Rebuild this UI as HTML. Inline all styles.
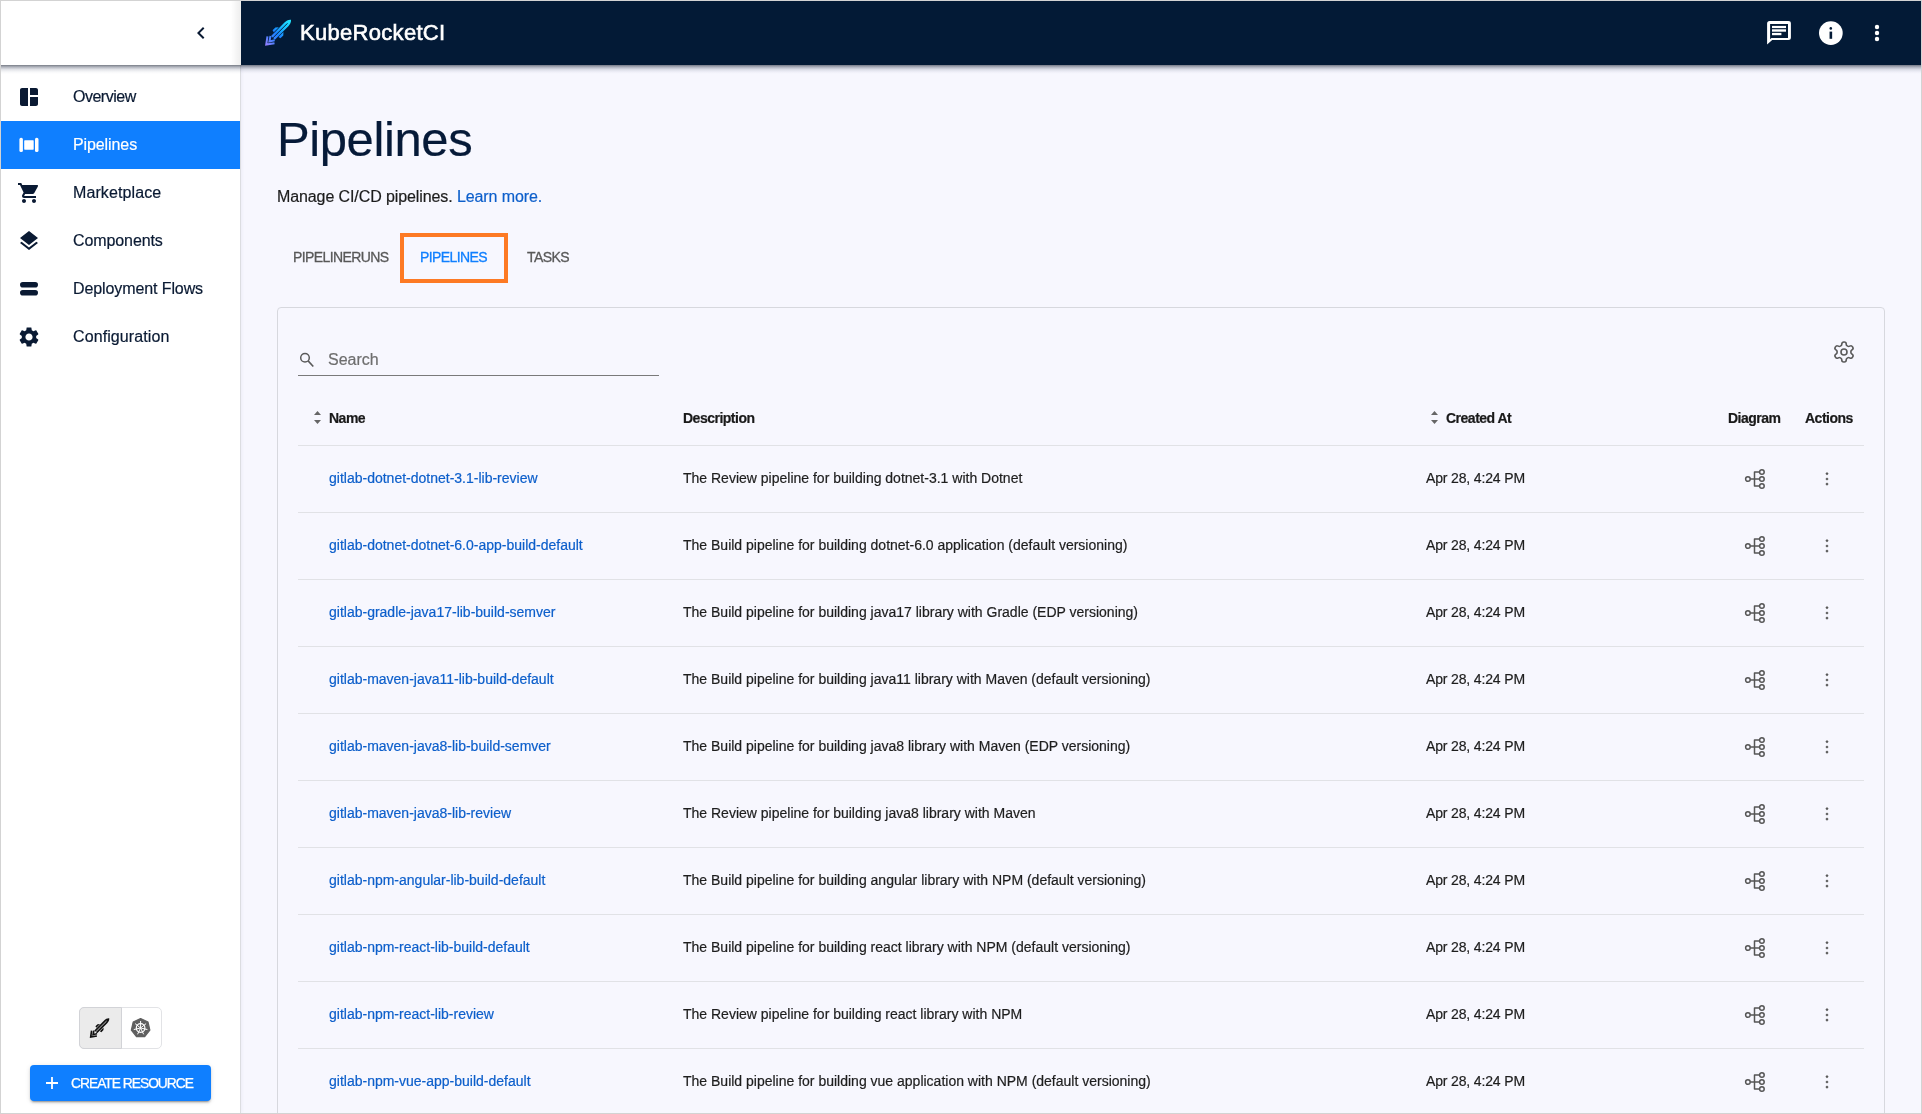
<!DOCTYPE html>
<html><head><meta charset="utf-8">
<style>
*{box-sizing:border-box;margin:0;padding:0}
html,body{width:1922px;height:1114px;overflow:hidden}
body{position:relative;will-change:transform;background:#f7f7fe;font-family:"Liberation Sans",sans-serif;color:#212121;-webkit-text-stroke:0.2px currentColor}
.abs{position:absolute}
.frame{position:absolute;left:0;top:0;width:1922px;height:1114px;border:1px solid #d3d3d3;z-index:50;pointer-events:none}
/* top bars */
.sbtop{left:1px;top:1px;width:240px;height:64px;background:#fff;z-index:5}
.hdr{left:241px;top:1px;width:1680px;height:64px;background:#031a36;z-index:5}
.shadow{left:1px;top:65px;width:1920px;height:9px;z-index:6;background:linear-gradient(to bottom,rgba(20,28,45,.58) 0px,rgba(40,50,75,.36) 2px,rgba(70,80,110,.16) 4.5px,rgba(110,120,150,.05) 7px,rgba(120,130,150,0) 9px)}
.lshadow{left:231px;top:1px;width:10px;height:64px;z-index:6;background:linear-gradient(to right,rgba(0,0,0,0),rgba(0,0,0,.07))}
/* sidebar */
.side{left:1px;top:65px;width:240px;height:1048px;background:#fff;border-right:1px solid #dcdde1;z-index:2;box-shadow:1px 0 3px rgba(60,60,120,.06)}
.nav{position:absolute;left:0;width:239px;height:48px;display:flex;align-items:center;font-size:16px;color:#0a1a33}
.nav svg{position:absolute;left:16px;top:12px;width:24px;height:24px}
.nav span{position:absolute;left:72px;top:0;line-height:48px;white-space:nowrap;letter-spacing:-0.1px}
.nav.sel{background:#0f7fff;color:#fff}
/* main */
.title{left:277px;top:109px;font-size:49px;line-height:60px;color:#061a38;letter-spacing:-0.4px}
.sub{left:277px;top:187px;font-size:16px;line-height:20px;color:#1c1c1c;letter-spacing:-0.1px}
.sub a{color:#0d5fcb;text-decoration:none}
.tab{top:247px;font-size:14px;line-height:20px;color:#585858;white-space:nowrap;letter-spacing:-0.6px;-webkit-text-stroke:0.3px currentColor}
.card{left:277px;top:307px;width:1608px;height:820px;border:1px solid #d7d8de;border-radius:4px;background:#f7f7fe}
.row{position:absolute;left:298px;width:1566px;height:67px;border-bottom:1px solid #e1e2e6}
.cell{position:absolute;top:0;height:66px;line-height:64px;font-size:14px;white-space:nowrap}
.lnk{left:31px;color:#0d5fcb}
.desc{left:385px;color:#1e1e1e}
.date{left:1128px;color:#1e1e1e;letter-spacing:-0.15px}
.hcell{position:absolute;top:0;height:54px;line-height:54px;font-size:14px;font-weight:700;color:#1a1a1a;white-space:nowrap;letter-spacing:-0.5px}
</style></head><body>
<div class="frame"></div>

<!-- sidebar top -->
<div class="abs sbtop">
  <svg class="abs" style="left:188px;top:20px" width="24" height="24" viewBox="0 0 24 24"><path fill="#0a1a33" d="M15.41 7.41 14 6l-6 6 6 6 1.41-1.41L10.83 12z"/></svg>
</div>
<!-- header -->
<div class="abs hdr">
  <svg class="abs" style="left:19px;top:13px" width="36" height="36" viewBox="0 0 36 36">
    <defs><linearGradient id="rg" gradientUnits="userSpaceOnUse" x1="0" y1="0" x2="0" y2="36"><stop offset="0" stop-color="#22eaff"/><stop offset=".3" stop-color="#18bfff"/><stop offset=".55" stop-color="#1a82ff"/><stop offset=".72" stop-color="#3a82ff"/><stop offset="1" stop-color="#9a80ff"/></linearGradient></defs>
    <g transform="translate(31,5.8) rotate(45)">
      <path fill="url(#rg)" d="M0 0C2 1.6 2.7 4 2.7 6.5V25.5H-2.7V6.5C-2.7 4-2 1.6 0 0Z"/>
      <path fill="url(#rg)" d="M3.3 14L5.6 16.5V20.5L3.3 21ZM-3.3 14L-5.6 16.5V20.5L-3.3 21Z"/>
      <path stroke="#031a36" stroke-width="0.9" d="M0 5V27"/>
      <path fill="none" stroke="url(#rg)" stroke-width="2" stroke-linejoin="miter" d="M-5 28.3L0 35L5 28.3M-3 26L0 30.5L3 26"/>
    </g>
  </svg>
  <div class="abs" style="left:59px;top:17px;font-size:22px;line-height:30px;color:#fff;letter-spacing:0.3px;-webkit-text-stroke:0.6px #fff">KubeRocketCI</div>
  <svg class="abs" style="left:1521px;top:17px" width="34" height="30" viewBox="0 0 34 30"><path fill="#fff" fill-rule="evenodd" d="M7.6 3H26.4A2.5 2.5 0 0 1 28.9 5.5V19.6A2.5 2.5 0 0 1 26.4 22.1H10.2L5.1 26.6V5.5A2.5 2.5 0 0 1 7.6 3ZM8.1 6.1V21.2L9.4 19.9H26V6.1Z"/><rect x="10" y="7.9" width="14" height="2.2" fill="#fff"/><rect x="10" y="11.3" width="14" height="2.4" fill="#fff"/><rect x="10" y="14.9" width="9.4" height="2.3" fill="#fff"/></svg>
  <svg class="abs" style="left:1578px;top:20px" width="24" height="24" viewBox="0 0 24 24"><circle cx="11.85" cy="12.05" r="11.85" fill="#fff"/><circle cx="11.8" cy="7.4" r="1.3" fill="#031a36"/><rect x="10.55" y="10.6" width="2.6" height="7.2" fill="#031a36"/></svg>
  <svg class="abs" style="left:1624px;top:20px" width="24" height="24" viewBox="0 0 24 24"><circle cx="12" cy="6" r="2.2" fill="#fff"/><circle cx="12" cy="12" r="2.2" fill="#fff"/><circle cx="12" cy="18" r="2.2" fill="#fff"/></svg>
</div>
<div class="abs shadow"></div><div class="abs lshadow"></div>

<!-- sidebar -->
<div class="abs side">
  <div class="nav" style="top:8px"><svg viewBox="0 0 24 24"><path fill="#0a1a33" d="M11 21H5c-1.1 0-2-.9-2-2V5c0-1.1.9-2 2-2h6v18zm2 0h6c1.1 0 2-.9 2-2v-7h-8v9zm8-11V5c0-1.1-.9-2-2-2h-6v7h8z"/></svg><span style="letter-spacing:-0.5px">Overview</span></div>
  <div class="nav sel" style="top:56px"><svg viewBox="0 0 24 24"><rect x="2.4" y="4.8" width="3.5" height="14.3" rx="1.6" fill="#fff"/><rect x="7.2" y="7.3" width="9.5" height="9.4" rx="0.6" fill="#fff"/><rect x="18" y="4.8" width="3.5" height="14.3" rx="1.6" fill="#fff"/></svg><span>Pipelines</span></div>
  <div class="nav" style="top:104px"><svg viewBox="0 0 24 24"><path fill="#0a1a33" d="M7 18c-1.1 0-1.99.9-1.99 2S5.9 22 7 22s2-.9 2-2-.9-2-2-2zM1 2v2h2l3.6 7.59-1.35 2.45c-.16.28-.25.61-.25.96 0 1.1.9 2 2 2h12v-2H7.42c-.14 0-.25-.11-.25-.25l.03-.12.9-1.63h7.45c.75 0 1.41-.41 1.75-1.03l3.58-6.49A1.003 1.003 0 0 0 20 4H5.21l-.94-2H1zm16 16c-1.1 0-1.99.9-1.99 2s.89 2 1.99 2 2-.9 2-2-.9-2-2-2z"/></svg><span style="letter-spacing:0.1px">Marketplace</span></div>
  <div class="nav" style="top:152px"><svg viewBox="0 0 24 24"><path fill="#0a1a33" d="m11.99 18.54-7.37-5.73L3 14.07l9 7 9-7-1.63-1.27-7.38 5.74zM12 16l7.36-5.73L21 9l-9-7-9 7 1.63 1.27L12 16z"/></svg><span>Components</span></div>
  <div class="nav" style="top:200px"><svg viewBox="0 0 24 24"><rect x="3" y="5" width="18" height="5.6" rx="2.8" fill="#0a1a33"/><rect x="3" y="13" width="18" height="5.6" rx="2.8" fill="#0a1a33"/></svg><span>Deployment Flows</span></div>
  <div class="nav" style="top:248px"><svg viewBox="0 0 24 24"><path fill="#0a1a33" d="M19.14 12.94c.04-.3.06-.61.06-.94 0-.32-.02-.64-.07-.94l2.03-1.58c.18-.14.23-.41.12-.61l-1.92-3.32c-.12-.22-.37-.29-.59-.22l-2.39.96c-.5-.38-1.03-.7-1.62-.94l-.36-2.54c-.04-.24-.24-.41-.48-.41h-3.84c-.24 0-.43.17-.47.41l-.36 2.54c-.59.24-1.13.57-1.62.94l-2.39-.96c-.22-.08-.47 0-.59.22L2.74 8.87c-.12.21-.08.47.12.61l2.03 1.58c-.05.3-.09.63-.09.94s.02.64.07.94l-2.03 1.58c-.18.14-.23.41-.12.61l1.92 3.32c.12.22.37.29.59.22l2.39-.96c.5.38 1.03.7 1.62.94l.36 2.54c.05.24.24.41.48.41h3.84c.24 0 .44-.17.47-.41l.36-2.54c.59-.24 1.13-.56 1.62-.94l2.39.96c.22.08.47 0 .59-.22l1.92-3.32c.12-.22.07-.47-.12-.61l-2.01-1.58zM12 15.6c-1.98 0-3.6-1.62-3.6-3.6s1.62-3.6 3.6-3.6 3.6 1.62 3.6 3.6-1.62 3.6-3.6 3.6z"/></svg><span style="letter-spacing:0.1px">Configuration</span></div>

  <!-- toggle -->
  <div class="abs" style="left:78px;top:942px;width:83px;height:42px;border:1px solid #e2e3e6;border-radius:5px;background:#fff;overflow:visible">
    <div class="abs" style="left:-1px;top:-1px;width:43px;height:42px;background:#ebebeb;border:1px solid #d2d3d7;border-radius:5px 0 0 5px"></div>
    <svg class="abs" style="left:6px;top:6px" width="27" height="27" viewBox="0 0 36 36">
      <g transform="translate(31,5.8) rotate(45)">
      <path fill="#111" d="M0 0C2 1.6 2.7 4 2.7 6.5V25.5H-2.7V6.5C-2.7 4-2 1.6 0 0Z"/>
      <path fill="#111" d="M3.3 14L5.6 16.5V20.5L3.3 21ZM-3.3 14L-5.6 16.5V20.5L-3.3 21Z"/>
      <path stroke="#ebebeb" stroke-width="1" d="M0 5V27"/>
      <path fill="none" stroke="#111" stroke-width="2.2" d="M-5 28.3L0 35L5 28.3M-3 26L0 30.5L3 26"/>
      </g></svg>
    <svg class="abs" style="left:50px;top:9px" width="22" height="22" viewBox="0 0 22 22">
      <path fill="#5f5f5f" stroke="#5f5f5f" stroke-width="1.2" stroke-linejoin="round" d="M10.60 1.50L18.03 5.08L19.86 13.11L14.72 19.56L6.48 19.56L1.34 13.11L3.17 5.08Z"/>
      <circle cx="10.6" cy="11" r="4.3" fill="none" stroke="#fff" stroke-width="1.2"/>
      <path stroke="#fff" stroke-width="1" stroke-linecap="round" d="M10.60 9.80L10.60 4.40M11.54 10.25L15.76 6.88M11.77 11.27L17.03 12.47M11.12 12.08L13.46 16.95M10.08 12.08L7.74 16.95M9.43 11.27L4.17 12.47M9.66 10.25L5.44 6.88"/>
      <circle cx="10.6" cy="11" r="1.1" fill="#fff"/>
    </svg>
  </div>
  <!-- create resource -->
  <div class="abs" style="left:29px;top:1000px;width:181px;height:36px;background:#0f7fff;border-radius:4px;box-shadow:0 3px 1px -2px rgba(0,0,0,.2),0 2px 2px 0 rgba(0,0,0,.14),0 1px 5px 0 rgba(0,0,0,.12)">
    <svg class="abs" style="left:15px;top:11px" width="14" height="14" viewBox="0 0 14 14"><path d="M7 1v12M1 7h12" stroke="#fff" stroke-width="1.8"/></svg>
    <div class="abs" style="left:41px;top:1px;line-height:36px;font-size:13.8px;color:#fff;white-space:nowrap;letter-spacing:-1px;-webkit-text-stroke:0.25px #fff">CREATE RESOURCE</div>
  </div>
</div>

<!-- main -->
<div class="abs title">Pipelines</div>
<div class="abs sub">Manage CI/CD pipelines. <a>Learn more.</a></div>
<div class="abs tab" style="left:293px">PIPELINERUNS</div>
<div class="abs tab" style="left:420px;color:#0f7fff">PIPELINES</div>
<div class="abs tab" style="left:527px">TASKS</div>
<div class="abs" style="left:400px;top:233px;width:108px;height:50px;border:4px solid #fd7a24"></div>

<div class="abs card"></div>
<!-- search -->
<svg class="abs" style="left:298px;top:351px" width="18" height="18" viewBox="0 0 18 18"><circle cx="7" cy="6.8" r="4.3" stroke="#5a5a5a" stroke-width="1.5" fill="none"/><path d="M10.1 9.9l5.2 5.6" stroke="#5a5a5a" stroke-width="1.6"/></svg>
<div class="abs" style="left:328px;top:350px;font-size:16px;line-height:20px;color:#6e6e6e">Search</div>
<div class="abs" style="left:298px;top:375px;width:361px;height:1px;background:#7a7a7a"></div>
<!-- settings gear -->
<svg class="abs" style="left:1832px;top:340px" width="24" height="24" viewBox="0 0 24 24" fill="none" stroke="#5a5a5a" stroke-width="1.6" stroke-linecap="round" stroke-linejoin="round"><path d="M12.22 2h-.44a2 2 0 0 0-2 2v.18a2 2 0 0 1-1 1.73l-.43.25a2 2 0 0 1-2 0l-.15-.08a2 2 0 0 0-2.73.73l-.22.38a2 2 0 0 0 .73 2.730l.15.1a2 2 0 0 1 1 1.72v.51a2 2 0 0 1-1 1.74l-.15.09a2 2 0 0 0-.73 2.73l.22.38a2 2 0 0 0 2.73.73l.15-.08a2 2 0 0 1 2 0l.43.25a2 2 0 0 1 1 1.73V20a2 2 0 0 0 2 2h.44a2 2 0 0 0 2-2v-.18a2 2 0 0 1 1-1.73l.43-.25a2 2 0 0 1 2 0l.15.08a2 2 0 0 0 2.73-.73l.22-.39a2 2 0 0 0-.73-2.73l-.15-.08a2 2 0 0 1-1-1.74v-.5a2 2 0 0 1 1-1.74l.15-.09a2 2 0 0 0 .73-2.73l-.22-.38a2 2 0 0 0-2.73-.73l-.15.08a2 2 0 0 1-2 0l-.43-.25a2 2 0 0 1-1-1.73V4a2 2 0 0 0-2-2z"/><circle cx="12" cy="12" r="3"/></svg>

<!-- table header -->
<div class="row" style="top:391px;height:55px">
  <svg class="abs" style="left:15px;top:19px" width="9" height="16" viewBox="0 0 9 16"><path d="M1 5l3.5-4L8 5z M1 10l3.5 4L8 10z" fill="#666"/></svg>
  <div class="hcell" style="left:31px">Name</div>
  <div class="hcell" style="left:385px">Description</div>
  <svg class="abs" style="left:1132px;top:19px" width="9" height="16" viewBox="0 0 9 16"><path d="M1 5l3.5-4L8 5z M1 10l3.5 4L8 10z" fill="#666"/></svg>
  <div class="hcell" style="left:1148px">Created At</div>
  <div class="hcell" style="left:1430px">Diagram</div>
  <div class="hcell" style="left:1507px">Actions</div>
</div>
<div class="row" style="top:446px"><div class="cell lnk">gitlab-dotnet-dotnet-3.1-lib-review</div><div class="cell desc">The Review pipeline for building dotnet-3.1 with Dotnet</div><div class="cell date">Apr 28, 4:24 PM</div><svg class="abs" style="left:1446px;top:22px" width="22" height="22" viewBox="0 0 22 22" fill="none" stroke="#555" stroke-width="1.5" stroke-linejoin="round"><circle cx="3.9" cy="11" r="2.3"/><circle cx="17.9" cy="4" r="2.3"/><circle cx="17.9" cy="11" r="2.3"/><circle cx="17.9" cy="18" r="2.3"/><path d="M6.2 11h9.4M15.6 4h-5.1v14h5.1"/></svg><svg class="abs" style="left:1521px;top:22px" width="16" height="22" viewBox="0 0 16 22"><path fill="#5a5a5a" d="M8 4.1l1.6 1.6L8 7.3 6.4 5.7zM8 9.4l1.6 1.6L8 12.6 6.4 11zM8 14.5l1.6 1.6L8 17.7 6.4 16.1z"/></svg></div>
<div class="row" style="top:513px"><div class="cell lnk">gitlab-dotnet-dotnet-6.0-app-build-default</div><div class="cell desc">The Build pipeline for building dotnet-6.0 application (default versioning)</div><div class="cell date">Apr 28, 4:24 PM</div><svg class="abs" style="left:1446px;top:22px" width="22" height="22" viewBox="0 0 22 22" fill="none" stroke="#555" stroke-width="1.5" stroke-linejoin="round"><circle cx="3.9" cy="11" r="2.3"/><circle cx="17.9" cy="4" r="2.3"/><circle cx="17.9" cy="11" r="2.3"/><circle cx="17.9" cy="18" r="2.3"/><path d="M6.2 11h9.4M15.6 4h-5.1v14h5.1"/></svg><svg class="abs" style="left:1521px;top:22px" width="16" height="22" viewBox="0 0 16 22"><path fill="#5a5a5a" d="M8 4.1l1.6 1.6L8 7.3 6.4 5.7zM8 9.4l1.6 1.6L8 12.6 6.4 11zM8 14.5l1.6 1.6L8 17.7 6.4 16.1z"/></svg></div>
<div class="row" style="top:580px"><div class="cell lnk">gitlab-gradle-java17-lib-build-semver</div><div class="cell desc">The Build pipeline for building java17 library with Gradle (EDP versioning)</div><div class="cell date">Apr 28, 4:24 PM</div><svg class="abs" style="left:1446px;top:22px" width="22" height="22" viewBox="0 0 22 22" fill="none" stroke="#555" stroke-width="1.5" stroke-linejoin="round"><circle cx="3.9" cy="11" r="2.3"/><circle cx="17.9" cy="4" r="2.3"/><circle cx="17.9" cy="11" r="2.3"/><circle cx="17.9" cy="18" r="2.3"/><path d="M6.2 11h9.4M15.6 4h-5.1v14h5.1"/></svg><svg class="abs" style="left:1521px;top:22px" width="16" height="22" viewBox="0 0 16 22"><path fill="#5a5a5a" d="M8 4.1l1.6 1.6L8 7.3 6.4 5.7zM8 9.4l1.6 1.6L8 12.6 6.4 11zM8 14.5l1.6 1.6L8 17.7 6.4 16.1z"/></svg></div>
<div class="row" style="top:647px"><div class="cell lnk">gitlab-maven-java11-lib-build-default</div><div class="cell desc">The Build pipeline for building java11 library with Maven (default versioning)</div><div class="cell date">Apr 28, 4:24 PM</div><svg class="abs" style="left:1446px;top:22px" width="22" height="22" viewBox="0 0 22 22" fill="none" stroke="#555" stroke-width="1.5" stroke-linejoin="round"><circle cx="3.9" cy="11" r="2.3"/><circle cx="17.9" cy="4" r="2.3"/><circle cx="17.9" cy="11" r="2.3"/><circle cx="17.9" cy="18" r="2.3"/><path d="M6.2 11h9.4M15.6 4h-5.1v14h5.1"/></svg><svg class="abs" style="left:1521px;top:22px" width="16" height="22" viewBox="0 0 16 22"><path fill="#5a5a5a" d="M8 4.1l1.6 1.6L8 7.3 6.4 5.7zM8 9.4l1.6 1.6L8 12.6 6.4 11zM8 14.5l1.6 1.6L8 17.7 6.4 16.1z"/></svg></div>
<div class="row" style="top:714px"><div class="cell lnk">gitlab-maven-java8-lib-build-semver</div><div class="cell desc">The Build pipeline for building java8 library with Maven (EDP versioning)</div><div class="cell date">Apr 28, 4:24 PM</div><svg class="abs" style="left:1446px;top:22px" width="22" height="22" viewBox="0 0 22 22" fill="none" stroke="#555" stroke-width="1.5" stroke-linejoin="round"><circle cx="3.9" cy="11" r="2.3"/><circle cx="17.9" cy="4" r="2.3"/><circle cx="17.9" cy="11" r="2.3"/><circle cx="17.9" cy="18" r="2.3"/><path d="M6.2 11h9.4M15.6 4h-5.1v14h5.1"/></svg><svg class="abs" style="left:1521px;top:22px" width="16" height="22" viewBox="0 0 16 22"><path fill="#5a5a5a" d="M8 4.1l1.6 1.6L8 7.3 6.4 5.7zM8 9.4l1.6 1.6L8 12.6 6.4 11zM8 14.5l1.6 1.6L8 17.7 6.4 16.1z"/></svg></div>
<div class="row" style="top:781px"><div class="cell lnk">gitlab-maven-java8-lib-review</div><div class="cell desc">The Review pipeline for building java8 library with Maven</div><div class="cell date">Apr 28, 4:24 PM</div><svg class="abs" style="left:1446px;top:22px" width="22" height="22" viewBox="0 0 22 22" fill="none" stroke="#555" stroke-width="1.5" stroke-linejoin="round"><circle cx="3.9" cy="11" r="2.3"/><circle cx="17.9" cy="4" r="2.3"/><circle cx="17.9" cy="11" r="2.3"/><circle cx="17.9" cy="18" r="2.3"/><path d="M6.2 11h9.4M15.6 4h-5.1v14h5.1"/></svg><svg class="abs" style="left:1521px;top:22px" width="16" height="22" viewBox="0 0 16 22"><path fill="#5a5a5a" d="M8 4.1l1.6 1.6L8 7.3 6.4 5.7zM8 9.4l1.6 1.6L8 12.6 6.4 11zM8 14.5l1.6 1.6L8 17.7 6.4 16.1z"/></svg></div>
<div class="row" style="top:848px"><div class="cell lnk">gitlab-npm-angular-lib-build-default</div><div class="cell desc">The Build pipeline for building angular library with NPM (default versioning)</div><div class="cell date">Apr 28, 4:24 PM</div><svg class="abs" style="left:1446px;top:22px" width="22" height="22" viewBox="0 0 22 22" fill="none" stroke="#555" stroke-width="1.5" stroke-linejoin="round"><circle cx="3.9" cy="11" r="2.3"/><circle cx="17.9" cy="4" r="2.3"/><circle cx="17.9" cy="11" r="2.3"/><circle cx="17.9" cy="18" r="2.3"/><path d="M6.2 11h9.4M15.6 4h-5.1v14h5.1"/></svg><svg class="abs" style="left:1521px;top:22px" width="16" height="22" viewBox="0 0 16 22"><path fill="#5a5a5a" d="M8 4.1l1.6 1.6L8 7.3 6.4 5.7zM8 9.4l1.6 1.6L8 12.6 6.4 11zM8 14.5l1.6 1.6L8 17.7 6.4 16.1z"/></svg></div>
<div class="row" style="top:915px"><div class="cell lnk">gitlab-npm-react-lib-build-default</div><div class="cell desc">The Build pipeline for building react library with NPM (default versioning)</div><div class="cell date">Apr 28, 4:24 PM</div><svg class="abs" style="left:1446px;top:22px" width="22" height="22" viewBox="0 0 22 22" fill="none" stroke="#555" stroke-width="1.5" stroke-linejoin="round"><circle cx="3.9" cy="11" r="2.3"/><circle cx="17.9" cy="4" r="2.3"/><circle cx="17.9" cy="11" r="2.3"/><circle cx="17.9" cy="18" r="2.3"/><path d="M6.2 11h9.4M15.6 4h-5.1v14h5.1"/></svg><svg class="abs" style="left:1521px;top:22px" width="16" height="22" viewBox="0 0 16 22"><path fill="#5a5a5a" d="M8 4.1l1.6 1.6L8 7.3 6.4 5.7zM8 9.4l1.6 1.6L8 12.6 6.4 11zM8 14.5l1.6 1.6L8 17.7 6.4 16.1z"/></svg></div>
<div class="row" style="top:982px"><div class="cell lnk">gitlab-npm-react-lib-review</div><div class="cell desc">The Review pipeline for building react library with NPM</div><div class="cell date">Apr 28, 4:24 PM</div><svg class="abs" style="left:1446px;top:22px" width="22" height="22" viewBox="0 0 22 22" fill="none" stroke="#555" stroke-width="1.5" stroke-linejoin="round"><circle cx="3.9" cy="11" r="2.3"/><circle cx="17.9" cy="4" r="2.3"/><circle cx="17.9" cy="11" r="2.3"/><circle cx="17.9" cy="18" r="2.3"/><path d="M6.2 11h9.4M15.6 4h-5.1v14h5.1"/></svg><svg class="abs" style="left:1521px;top:22px" width="16" height="22" viewBox="0 0 16 22"><path fill="#5a5a5a" d="M8 4.1l1.6 1.6L8 7.3 6.4 5.7zM8 9.4l1.6 1.6L8 12.6 6.4 11zM8 14.5l1.6 1.6L8 17.7 6.4 16.1z"/></svg></div>
<div class="row" style="top:1049px"><div class="cell lnk">gitlab-npm-vue-app-build-default</div><div class="cell desc">The Build pipeline for building vue application with NPM (default versioning)</div><div class="cell date">Apr 28, 4:24 PM</div><svg class="abs" style="left:1446px;top:22px" width="22" height="22" viewBox="0 0 22 22" fill="none" stroke="#555" stroke-width="1.5" stroke-linejoin="round"><circle cx="3.9" cy="11" r="2.3"/><circle cx="17.9" cy="4" r="2.3"/><circle cx="17.9" cy="11" r="2.3"/><circle cx="17.9" cy="18" r="2.3"/><path d="M6.2 11h9.4M15.6 4h-5.1v14h5.1"/></svg><svg class="abs" style="left:1521px;top:22px" width="16" height="22" viewBox="0 0 16 22"><path fill="#5a5a5a" d="M8 4.1l1.6 1.6L8 7.3 6.4 5.7zM8 9.4l1.6 1.6L8 12.6 6.4 11zM8 14.5l1.6 1.6L8 17.7 6.4 16.1z"/></svg></div>
</body></html>
